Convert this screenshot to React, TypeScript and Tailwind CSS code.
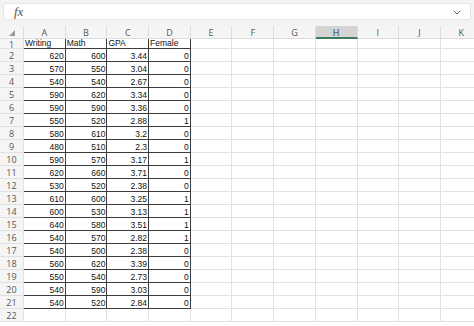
import React from "react";

const data: (string | number)[][] = [
  [620, 600, "3.44", 0],
  [570, 550, "3.04", 0],
  [540, 540, "2.67", 0],
  [590, 620, "3.34", 0],
  [590, 590, "3.36", 0],
  [550, 520, "2.88", 1],
  [580, 610, "3.2", 0],
  [480, 510, "2.3", 0],
  [590, 570, "3.17", 1],
  [620, 660, "3.71", 0],
  [530, 520, "2.38", 0],
  [610, 600, "3.25", 1],
  [600, 530, "3.13", 1],
  [640, 580, "3.51", 1],
  [540, 570, "2.82", 1],
  [540, 500, "2.38", 0],
  [560, 620, "3.39", 0],
  [550, 540, "2.73", 0],
  [540, 590, "3.03", 0],
  [540, 520, "2.84", 0],
];

const cols = ["A", "B", "C", "D", "E", "F", "G", "H", "I", "J", "K"];

export default function App() {
  const rows: (string | number)[][] = [["Writing", "Math", "GPA", "Female"], ...data];
  return (
    <div className="w-[474px] h-[326px] overflow-hidden bg-white" style={{ fontFamily: "'Liberation Sans', Arial, sans-serif" }}>
      {/* formula bar */}
      <div className="h-[26px] bg-[#f3f3f3] pt-[3px] px-[3px] pb-[6px]">
        <div className="h-[17px] bg-white rounded-[3px] border border-[#e6e6e6] flex items-center pl-[10px] pr-[9px]">
          <span className="italic text-[13px] text-[#555] leading-none" style={{ fontFamily: "'Liberation Serif', serif" }}>
            fx
          </span>
          <div className="flex-1" />
          <svg width="8" height="5" viewBox="0 0 8 5" className="mt-[1px]">
            <path d="M0.8 0.8 L4 4 L7.2 0.8" fill="none" stroke="#666" strokeWidth="1" />
          </svg>
        </div>
      </div>
      {/* header row */}
      <div className="flex h-[13px]">
        <div className="w-[24px] shrink-0 bg-[#f5f5f5] border-r border-b border-[#dcdcdc] flex items-end justify-center pb-[2px]">
          <svg width="6" height="6" viewBox="0 0 6 6">
            <path d="M6 0 L6 6 L0 6 Z" fill="#9a9a9a" />
          </svg>
        </div>
        {cols.map((c) => (
          <div
            key={c}
            className={
              c === "H"
                ? "w-[41.7px] shrink-0 bg-[#d4d4d4] border-r border-[#dcdcdc] border-b-2 border-b-[#3f7a5a] flex items-center justify-center text-[9px] leading-none text-[#333] pt-[1px]"
                : "w-[41.7px] shrink-0 bg-[#f5f5f5] border-r border-b border-[#dcdcdc] flex items-center justify-center text-[9px] leading-none text-[#555] pt-[1px]"
            }
            style={{ fontFamily: "'Open Sans', 'Noto Sans', sans-serif" }}
          >
            {c}
          </div>
        ))}
      </div>
      {Array.from({ length: 22 }).map((_, r) => (
        <div key={r} className={r === 0 ? "flex h-[10px]" : "flex h-[13px]"}>
          <div
            className="w-[24px] shrink-0 bg-[#f5f5f5] border-r border-b border-[#e1e1e1] flex items-center justify-center text-[9px] text-[#555] leading-none pt-[1px]"
            style={{ fontFamily: "'Open Sans', 'Noto Sans', sans-serif" }}
          >
            {r + 1}
          </div>
          {cols.map((c, ci) => {
            const inTable = r < 21 && ci < 4;
            const v = inTable ? rows[r][ci] : "";
            const isText = r === 0;
            return (
              <div
                key={c}
                className={
                  (inTable ? "border-r border-b border-[#3c3c3c] " : "border-r border-b border-[#e1e1e1] ") +
                  "w-[41.7px] shrink-0 flex items-end text-[8.5px] leading-none text-[#111] pb-[1px] " +
                  (isText ? "justify-start pl-[1px]" : "justify-end pr-[1px]")
                }
              >
                {v}
              </div>
            );
          })}
        </div>
      ))}
    </div>
  );
}
